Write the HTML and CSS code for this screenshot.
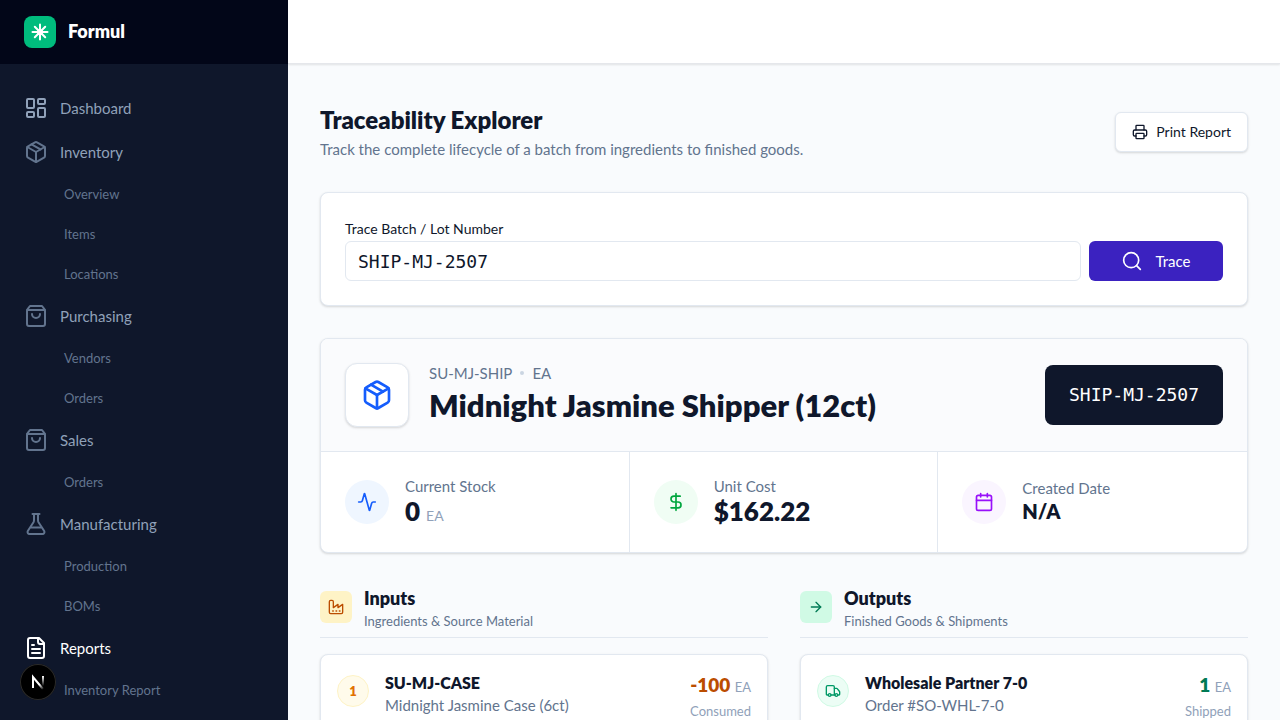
FILE: index.html
```
<!DOCTYPE html>
<html lang="en">
<head>
  <meta charset="UTF-8">
  <meta name="viewport" content="width=device-width, initial-scale=1">
  <title>Traceability Explorer</title>
  <link rel="stylesheet" href="styles.css">
</head>
<body>
<svg class="sprite" aria-hidden="true">
  <symbol id="package" viewBox="0 0 24 24">
    <path d="M11 21.73a2 2 0 0 0 2 0l7-4A2 2 0 0 0 21 16V8a2 2 0 0 0-1-1.73l-7-4a2 2 0 0 0-2 0l-7 4A2 2 0 0 0 3 8v8a2 2 0 0 0 1 1.73z"/>
    <path d="M12 22V12"/>
    <path d="M3.3 7 12 12l8.7-5"/>
    <path d="m7.5 4.27 9 5.15"/>
  </symbol>
  <symbol id="bag" viewBox="0 0 24 24">
    <path d="M6 2 3.6 5.2A3 3 0 0 0 3 7v13a2 2 0 0 0 2 2h14a2 2 0 0 0 2-2V7a3 3 0 0 0-.6-1.8L18 2z"/>
    <path d="M3.1 6h17.8"/>
    <path d="M16 10a4 4 0 0 1-8 0"/>
  </symbol>
</svg>

<div class="app">
  <aside class="sidebar">
    <div class="brand">
      <span class="logo">
        <svg class="icon" viewBox="0 0 20 20" width="20" height="20"><path d="M10 2.5v15M2.5 10h15M4.8 4.8l10.4 10.4M15.2 4.8 4.8 15.2"/><circle cx="10" cy="10" r="2"/></svg>
      </span>
      <span class="brand-name">Formul</span>
    </div>
    <nav class="nav">
      <a class="nav-item first" href="#">
        <svg class="icon" viewBox="0 0 24 24" width="24" height="24"><rect x="3" y="3" width="7" height="9" rx="1"/><rect x="14" y="3" width="7" height="5" rx="1"/><rect x="14" y="12" width="7" height="9" rx="1"/><rect x="3" y="16" width="7" height="5" rx="1"/></svg>
        Dashboard
      </a>
      <a class="nav-item" href="#"><svg class="icon" width="24" height="24"><use href="#package"/></svg>Inventory</a>
      <a class="nav-sub" href="#">Overview</a>
      <a class="nav-sub" href="#">Items</a>
      <a class="nav-sub" href="#">Locations</a>
      <a class="nav-item" href="#"><svg class="icon" width="24" height="24"><use href="#bag"/></svg>Purchasing</a>
      <a class="nav-sub" href="#">Vendors</a>
      <a class="nav-sub" href="#">Orders</a>
      <a class="nav-item" href="#"><svg class="icon" width="24" height="24"><use href="#bag"/></svg>Sales</a>
      <a class="nav-sub" href="#">Orders</a>
      <a class="nav-item" href="#">
        <svg class="icon" viewBox="0 0 24 24" width="24" height="24"><path d="M10 2v6.3a4 4 0 0 1-.5 1.9L3.8 19a2 2 0 0 0 1.7 3h13a2 2 0 0 0 1.7-3l-5.7-8.8a4 4 0 0 1-.5-1.9V2"/><path d="M8.5 2h7"/><path d="M7 15.5h10"/></svg>
        Manufacturing
      </a>
      <a class="nav-sub" href="#">Production</a>
      <a class="nav-sub" href="#">BOMs</a>
      <a class="nav-item active" href="#">
        <svg class="icon" viewBox="0 0 24 24" width="24" height="24"><path d="M15 2H6a2 2 0 0 0-2 2v16a2 2 0 0 0 2 2h12a2 2 0 0 0 2-2V7z"/><path d="M14 2v4a2 2 0 0 0 2 2h4"/><path d="M10 9H8"/><path d="M16 13H8"/><path d="M16 17H8"/></svg>
        Reports
      </a>
      <a class="nav-sub" href="#">Inventory Report</a>
    </nav>
  </aside>

  <div class="page">
    <header class="topbar"></header>
    <main class="content">
      <div class="page-head">
        <div>
          <h1>Traceability Explorer</h1>
          <p>Track the complete lifecycle of a batch from ingredients to finished goods.</p>
        </div>
        <button class="btn-outline" type="button">
          <svg class="icon" viewBox="0 0 24 24" width="16" height="16"><path d="M6 18H4a2 2 0 0 1-2-2v-5a2 2 0 0 1 2-2h16a2 2 0 0 1 2 2v5a2 2 0 0 1-2 2h-2"/><path d="M6 9V3a1 1 0 0 1 1-1h10a1 1 0 0 1 1 1v6"/><rect x="6" y="14" width="12" height="8" rx="1"/></svg>
          Print Report
        </button>
      </div>

      <form class="card search">
        <div class="field">
          <label for="batch">Trace Batch / Lot Number</label>
          <input type="text" id="batch" value="SHIP-MJ-2507">
        </div>
        <button class="btn-primary" type="button">
          <svg class="icon" viewBox="0 0 24 24" width="20" height="20"><circle cx="11" cy="11" r="9"/><path d="m22 22-4.5-4.5"/></svg>
          Trace
        </button>
      </form>

      <section class="card batch">
        <div class="batch-head">
          <span class="batch-icon"><svg class="icon" width="32" height="32"><use href="#package"/></svg></span>
          <div class="batch-info">
            <div class="batch-meta"><span>SU-MJ-SHIP</span><span class="dot"></span><span>EA</span></div>
            <h2>Midnight Jasmine Shipper (12ct)</h2>
          </div>
          <span class="batch-code">SHIP-MJ-2507</span>
        </div>
        <div class="stats">
          <div class="stat">
            <span class="stat-icon blue"><svg class="icon" viewBox="0 0 24 24" width="20" height="20"><path d="M22 12h-2.48a2 2 0 0 0-1.93 1.46l-2.35 8.36a.25.25 0 0 1-.48 0L9.24 2.18a.25.25 0 0 0-.48 0l-2.35 8.36A2 2 0 0 1 4.49 12H2"/></svg></span>
            <div>
              <div class="stat-label">Current Stock</div>
              <div class="stat-value">0 <small>EA</small></div>
            </div>
          </div>
          <div class="stat">
            <span class="stat-icon green"><svg class="icon" viewBox="0 0 24 24" width="20" height="20"><path d="M12 2v20"/><path d="M17 5H9.5a3.5 3.5 0 0 0 0 7h5a3.5 3.5 0 0 1 0 7H6"/></svg></span>
            <div>
              <div class="stat-label">Unit Cost</div>
              <div class="stat-value">$162.22</div>
            </div>
          </div>
          <div class="stat">
            <span class="stat-icon purple"><svg class="icon" viewBox="0 0 24 24" width="20" height="20"><path d="M8 2v4"/><path d="M16 2v4"/><rect x="3" y="4" width="18" height="18" rx="2"/><path d="M3 10h18"/></svg></span>
            <div>
              <div class="stat-label">Created Date</div>
              <div class="stat-value date">N/A</div>
            </div>
          </div>
        </div>
      </section>

      <div class="columns">
        <section>
          <div class="section-head">
            <span class="section-icon amber"><svg class="icon" viewBox="0 0 24 24" width="16" height="16"><path d="M2 20a2 2 0 0 0 2 2h16a2 2 0 0 0 2-2V8l-7 5V8l-7 5V4a2 2 0 0 0-2-2H4a2 2 0 0 0-2 2z"/><path d="M17 18h1"/><path d="M12 18h1"/><path d="M7 18h1"/></svg></span>
            <div>
              <h3>Inputs</h3>
              <p>Ingredients &amp; Source Material</p>
            </div>
          </div>
          <div class="card entry">
            <span class="entry-mark amber">1</span>
            <div class="entry-text">
              <h4>SU-MJ-CASE</h4>
              <p>Midnight Jasmine Case (6ct)</p>
            </div>
            <div class="entry-qty">
              <div class="qty amber">-100 <small>EA</small></div>
              <p>Consumed</p>
            </div>
          </div>
        </section>
        <section>
          <div class="section-head">
            <span class="section-icon emerald"><svg class="icon" viewBox="0 0 24 24" width="16" height="16"><path d="M5 12h14"/><path d="m12 5 7 7-7 7"/></svg></span>
            <div>
              <h3>Outputs</h3>
              <p>Finished Goods &amp; Shipments</p>
            </div>
          </div>
          <div class="card entry">
            <span class="entry-mark emerald"><svg class="icon" viewBox="0 0 24 24" width="16" height="16"><path d="M14 18V6a2 2 0 0 0-2-2H4a2 2 0 0 0-2 2v11a1 1 0 0 0 1 1h2"/><path d="M15 18H9"/><path d="M19 18h2a1 1 0 0 0 1-1v-3.65a1 1 0 0 0-.22-.62l-3.48-4.35A1 1 0 0 0 17.52 8H14"/><circle cx="17" cy="18" r="2"/><circle cx="7" cy="18" r="2"/></svg></span>
            <div class="entry-text">
              <h4>Wholesale Partner 7-0</h4>
              <p>Order #SO-WHL-7-0</p>
            </div>
            <div class="entry-qty">
              <div class="qty emerald">1 <small>EA</small></div>
              <p>Shipped</p>
            </div>
          </div>
        </section>
      </div>
    </main>
  </div>
</div>

<button class="dev-badge" type="button" aria-label="Open developer tools">
  <svg viewBox="0 0 36 36" width="36" height="36">
    <defs>
      <linearGradient id="fade-diag" x1="20" y1="20" x2="24" y2="25" gradientUnits="userSpaceOnUse"><stop stop-color="#fff"/><stop offset="1" stop-color="#fff" stop-opacity="0"/></linearGradient>
      <linearGradient id="fade-stem" x1="23" y1="12" x2="23" y2="22" gradientUnits="userSpaceOnUse"><stop stop-color="#fff"/><stop offset="1" stop-color="#fff" stop-opacity="0"/></linearGradient>
    </defs>
    <path d="M13 24V13l10 12" fill="none" stroke="url(#fade-diag)" stroke-width="2"/>
    <path d="M22 12h2v10h-2z" fill="url(#fade-stem)"/>
  </svg>
</button>
</body>
</html>
```
FILE: styles.css
```
:root {
  --navy: #0f172b;
  --muted: #62748e;
  --faint: #90a1b9;
  --border: #e2e8f0;
  --shadow: 0 1px 3px rgba(0, 0, 0, 0.1), 0 1px 2px rgba(0, 0, 0, 0.06);
  --mono: 'DejaVu Sans Mono', 'Liberation Mono', monospace;
}

* {
  box-sizing: border-box;
}

body {
  margin: 0;
  font-family: 'Lato', 'Open Sans', sans-serif;
  font-size: 15px;
  line-height: 20px;
  color: var(--navy);
  background: #f9fbfd;
}

h1, h2, h3, h4, p {
  margin: 0;
}

h1, h2, h3, h4 {
  font-weight: 800;
}

button, input {
  font: inherit;
  color: inherit;
}

button {
  cursor: pointer;
}

.sprite {
  display: none;
}

.icon {
  flex: none;
  fill: none;
  stroke: currentColor;
  stroke-width: 2;
  stroke-linecap: round;
  stroke-linejoin: round;
}

.app {
  display: flex;
  height: 100vh;
}

/* sidebar */
.sidebar {
  display: flex;
  flex-direction: column;
  flex: none;
  width: 288px;
  background: var(--navy);
}

.brand {
  display: flex;
  align-items: center;
  gap: 12px;
  flex: none;
  height: 64px;
  padding: 0 24px;
  background: #020618;
  color: #fff;
}

.logo {
  display: grid;
  place-items: center;
  width: 32px;
  height: 32px;
  border-radius: 8px;
  background: #00bc7d;
}

.brand-name {
  padding-bottom: 2px;
  font-size: 18px;
  font-weight: 800;
}

.nav {
  display: flex;
  flex-direction: column;
  gap: 4px;
  padding: 24px 12px;
  overflow-y: auto;
  scrollbar-width: none;
}

.nav-item,
.nav-sub {
  display: flex;
  align-items: center;
  flex: none;
  text-decoration: none;
}

.nav-item {
  gap: 12px;
  height: 40px;
  padding: 0 12px;
  color: var(--faint);
}

.nav-item .icon {
  color: var(--muted);
}

.nav-item.first .icon {
  color: var(--faint);
}

.nav-item.active,
.nav-item.active .icon {
  color: #fff;
}

.nav-sub {
  height: 36px;
  padding-left: 52px;
  font-size: 13px;
  color: var(--muted);
}

/* page */
.page {
  display: flex;
  flex-direction: column;
  flex: 1;
  min-width: 0;
}

.topbar {
  flex: none;
  height: 64px;
  border-bottom: 1px solid #e5e7eb;
  background: #fff;
  box-shadow: 0 1px 2px rgba(0, 0, 0, 0.1);
}

.content {
  display: flex;
  flex-direction: column;
  gap: 32px;
  padding: 40px 32px;
  overflow-y: auto;
  scrollbar-width: none;
}

.content > * {
  flex: none;
}

.page-head {
  display: flex;
  align-items: center;
  justify-content: space-between;
  height: 56px;
}

.page-head h1 {
  font-size: 24px;
  line-height: 30px;
  margin-bottom: 4px;
}

.page-head p {
  color: var(--muted);
}

.btn-outline {
  display: flex;
  align-items: center;
  gap: 8px;
  height: 40px;
  padding: 0 16px;
  border: 1px solid var(--border);
  border-radius: 6px;
  background: #fff;
  box-shadow: var(--shadow);
  font-size: 14px;
}

.card {
  border: 1px solid var(--border);
  border-radius: 8px;
  background: #fff;
  box-shadow: var(--shadow);
}

.search {
  display: flex;
  align-items: flex-end;
  gap: 8px;
  padding: 24px;
}

.field {
  flex: 1;
}

.field label {
  display: block;
  font-size: 14px;
  line-height: 24px;
}

.field input {
  display: block;
  width: 100%;
  height: 40px;
  padding: 0 12px;
  border: 1px solid var(--border);
  border-radius: 6px;
  background: #fff;
  font-family: var(--mono);
  font-size: 18px;
}

.btn-primary {
  display: flex;
  align-items: center;
  justify-content: center;
  gap: 14px;
  width: 134px;
  height: 40px;
  border: 0;
  border-radius: 6px;
  background: #3b22c0;
  color: #fff;
}

/* batch summary */
.batch {
  overflow: hidden;
}

.batch-head {
  display: flex;
  align-items: center;
  gap: 20px;
  padding: 24px;
  border-bottom: 1px solid var(--border);
  background: #fafbfd;
}

.batch-icon {
  display: grid;
  place-items: center;
  width: 64px;
  height: 64px;
  border: 1px solid var(--border);
  border-radius: 12px;
  background: #fff;
  box-shadow: var(--shadow);
  color: #155dfc;
}

.batch-info {
  flex: 1;
  padding-bottom: 4px;
}

.batch-meta {
  display: flex;
  align-items: center;
  gap: 8px;
  color: var(--muted);
}

.dot {
  width: 4px;
  height: 4px;
  border-radius: 50%;
  background: #cad5e2;
}

.batch-info h2 {
  margin-top: 4px;
  font-size: 31px;
  line-height: 36px;
}

.batch-code {
  padding: 16px 24px;
  border-radius: 8px;
  background: var(--navy);
  color: #fff;
  font-family: var(--mono);
  font-size: 18px;
  line-height: 28px;
}

.stats {
  display: grid;
  grid-template-columns: repeat(3, 1fr);
}

.stat {
  display: flex;
  align-items: center;
  gap: 16px;
  padding: 24px;
}

.stat:not(:last-child) {
  border-right: 1px solid var(--border);
}

.stat-icon {
  display: grid;
  place-items: center;
  width: 44px;
  height: 44px;
  border-radius: 50%;
}

.stat-icon.blue {
  background: #eff6ff;
  color: #155dfc;
}

.stat-icon.green {
  background: #f0fdf4;
  color: #00a63e;
}

.stat-icon.purple {
  background: #faf5ff;
  color: #9810fa;
}

.stat-label {
  color: var(--muted);
}

.stat-value {
  font-size: 26px;
  line-height: 30px;
  padding-bottom: 2px;
  font-weight: 800;
}

.stat-value.date {
  font-size: 20px;
  line-height: 26px;
}

small {
  font-size: 14px;
  line-height: 1;
  font-weight: 400;
  color: var(--faint);
}

/* inputs and outputs */
.columns {
  display: grid;
  grid-template-columns: 1fr 1fr;
  gap: 32px;
}

.section-head {
  display: flex;
  align-items: center;
  gap: 12px;
  margin-bottom: 16px;
  padding-bottom: 8px;
  border-bottom: 1px solid var(--border);
}

.section-icon {
  display: grid;
  place-items: center;
  width: 32px;
  height: 32px;
  border-radius: 6px;
}

.section-icon.amber {
  background: #fef3c6;
  color: #bb4d00;
}

.section-icon.emerald {
  background: #d0fae5;
  color: #007a55;
}

.section-head h3 {
  padding-bottom: 2px;
  font-size: 18px;
  line-height: 26px;
}

.section-head p {
  font-size: 13px;
  line-height: 16px;
  color: var(--muted);
}

.entry {
  display: flex;
  align-items: flex-start;
  gap: 16px;
  padding: 16px;
}

.entry-mark {
  display: grid;
  place-items: center;
  width: 32px;
  height: 32px;
  margin-top: 4px;
  border-radius: 50%;
  font-size: 13px;
  font-weight: 800;
}

.entry-mark.amber {
  border: 1px solid #fef3c6;
  background: #fffbeb;
  color: #e17100;
}

.entry-mark.emerald {
  border: 1px solid #d0fae5;
  background: #ecfdf5;
  color: #009966;
}

.entry-text {
  flex: 1;
}

.entry-text h4 {
  font-size: 16px;
  line-height: 24px;
}

.entry-text p {
  color: var(--muted);
}

.entry-qty {
  text-align: right;
}

.qty {
  font-size: 19px;
  line-height: 28px;
  font-weight: 800;
}

.qty.amber {
  color: #bb4d00;
}

.qty.emerald {
  color: #007a55;
}

.qty small,
.entry-qty p {
  font-size: 13px;
}

.entry-qty p {
  margin-top: 4px;
  line-height: 16px;
  color: var(--faint);
}

/* floats over the sidebar */
.dev-badge {
  position: fixed;
  left: 20px;
  bottom: 20px;
  width: 36px;
  height: 36px;
  padding: 0;
  border: 0;
  border-radius: 50%;
  background: #000;
  box-shadow: inset 0 0 0 1px #2b2b2b;
}
```
